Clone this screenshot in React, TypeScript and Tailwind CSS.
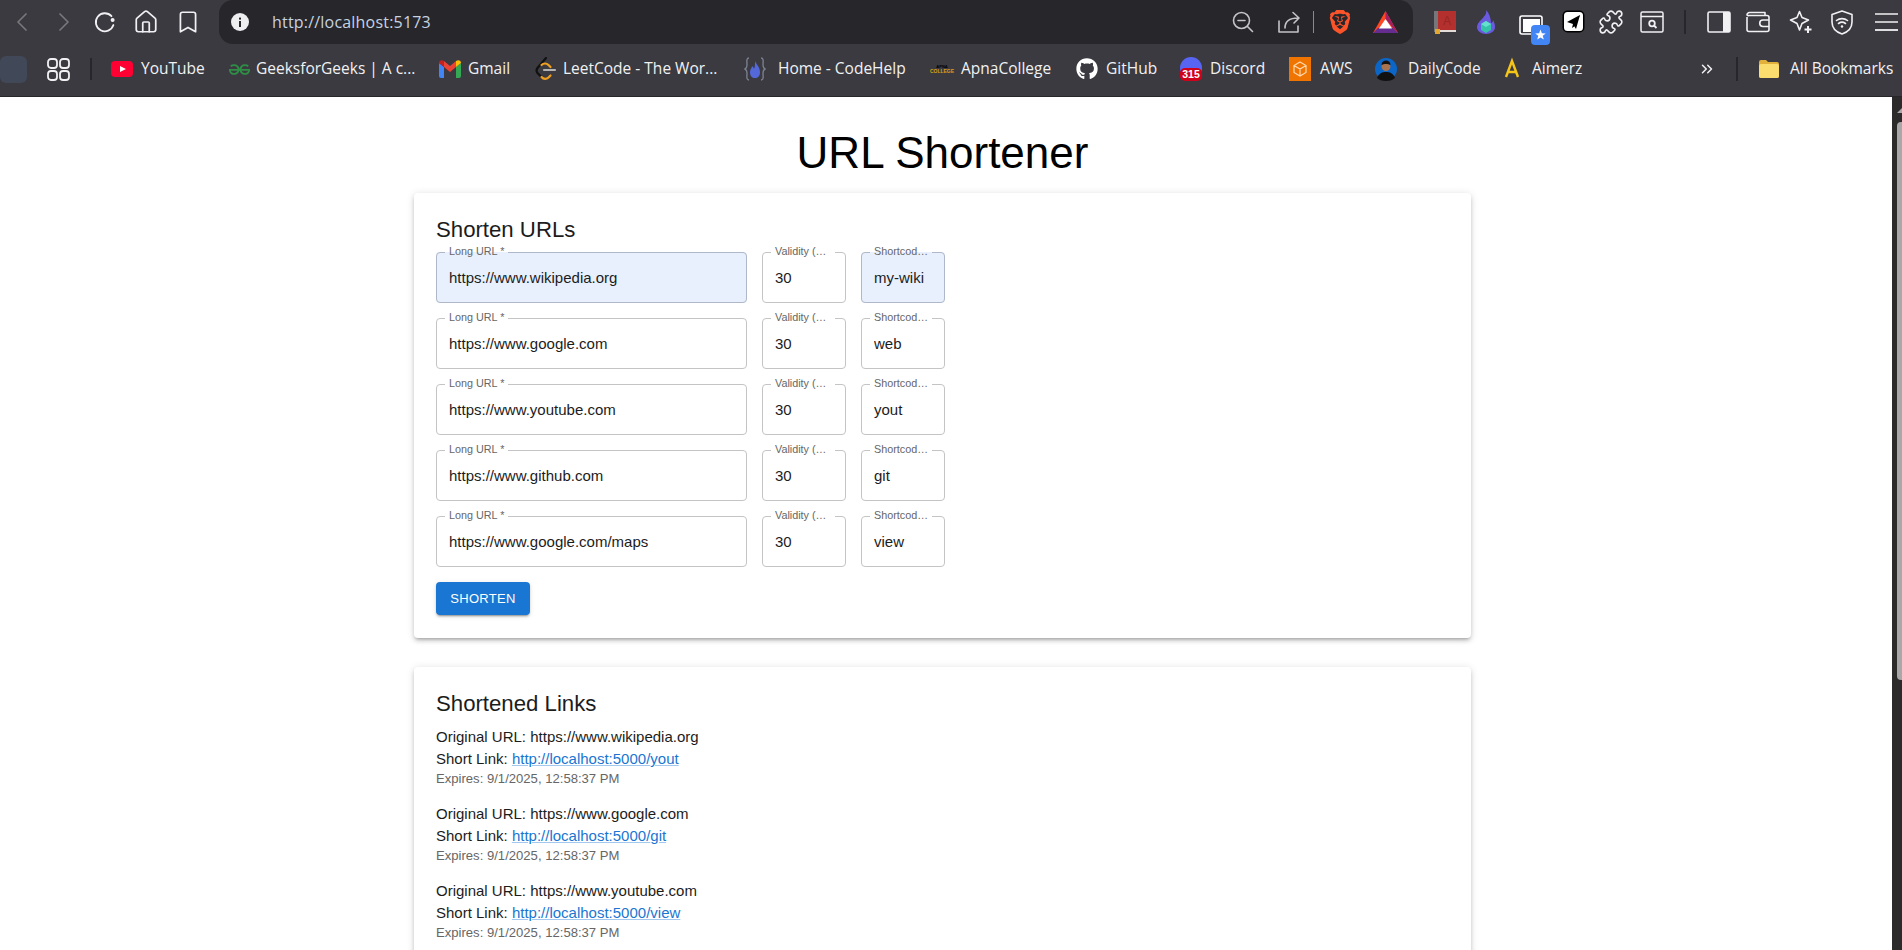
import type { ReactNode } from "react";
import {
  Bookmark,
  ChevronLeft,
  ChevronRight,
  ChevronsRight,
  Home,
  Puzzle,
} from "lucide-react";
import { FaGithub } from "react-icons/fa";
import { SiBrave, SiGeeksforgeeks } from "react-icons/si";

const rows = [
  { url: "https://www.wikipedia.org", code: "my-wiki", filled: true },
  { url: "https://www.google.com", code: "web", filled: false },
  { url: "https://www.youtube.com", code: "yout", filled: false },
  { url: "https://www.github.com", code: "git", filled: false },
  { url: "https://www.google.com/maps", code: "view", filled: false },
];

const links = [
  { url: "https://www.wikipedia.org", code: "yout" },
  { url: "https://www.google.com", code: "git" },
  { url: "https://www.youtube.com", code: "view" },
];

function Reload() {
  return (
    <svg width="24" height="24" viewBox="0 0 24 24" fill="none" stroke="#f1f1f3" strokeWidth="1.8">
      <path d="M18.5 6.2A9 9 0 1 0 20.4 15" strokeLinecap="round" />
      <circle cx="19.6" cy="10" r="2" fill="#f1f1f3" stroke="none" />
    </svg>
  );
}

function InfoDot() {
  return (
    <svg width="18" height="18" viewBox="0 0 18 18">
      <circle cx="9" cy="9" r="9" fill="#eeeef0" />
      <rect x="8" y="8" width="2" height="6" fill="#27262b" />
      <rect x="8" y="4.6" width="2" height="2" fill="#27262b" />
    </svg>
  );
}

function ZoomMinus() {
  return (
    <svg width="22" height="22" viewBox="0 0 22 22" fill="none" stroke="#c4c4c8" strokeWidth="1.6" strokeLinecap="round">
      <circle cx="9.5" cy="9.5" r="8" />
      <path d="M6 9.5h7M15.5 15.5l5 5" />
    </svg>
  );
}

function ShareIcon() {
  return (
    <svg width="24" height="24" viewBox="0 0 24 24" fill="none" stroke="#c4c4c8" strokeWidth="1.6" strokeLinecap="round" strokeLinejoin="round">
      <path d="M2 11v11h19v-6" />
      <path d="M8 18c0-6 4-10 13-10M16 2.5 22 8l-5 5" />
    </svg>
  );
}

function BatTriangle() {
  return (
    <svg width="25" height="24" viewBox="0 0 25 24">
      <polygon points="12.5,1 0,23 25,23" fill="#ff4724" />
      <polygon points="12.5,1 12.5,9 20,18 25,23" fill="#9e1f63" />
      <polygon points="0,23 25,23 20,18 5,18" fill="#662d91" />
      <polygon points="12.5,9 6,18.5 19,18.5" fill="#ffffff" />
    </svg>
  );
}

function RedBook() {
  return (
    <svg width="22" height="24" viewBox="0 0 22 24">
      <rect x="0" y="1" width="5" height="21" fill="#77767a" />
      <rect x="4" y="1" width="18" height="19" fill="#b3302e" />
      <rect x="4" y="20" width="18" height="2" fill="#e4dcd8" />
      <text x="13" y="15" textAnchor="middle" fontSize="12" fill="#982724" fontFamily="Liberation Sans, sans-serif">A</text>
      <rect x="1" y="19" width="5" height="5" fill="#e0a82e" />
    </svg>
  );
}

function Flame() {
  return (
    <svg width="20" height="24" viewBox="0 0 20 24">
      <path d="M10 0c1 4-1 5-4 9C3 12 1 14 1 17c0 4 4 7 9 7s9-3 9-7c0-3-1-5-2-7 0 2-1 3-2 3 0-5-2-10-5-13z" fill="#6a5ae0" />
      <path d="M10 11l5 3v6l-5 3-5-3v-6z" fill="#35c3a8" />
      <path d="M10 11l5 3-5 3-5-3z" fill="#66dfd0" />
    </svg>
  );
}

function TabsStar() {
  return (
    <svg width="32" height="31" viewBox="0 0 32 31">
      <rect x="1" y="1" width="22" height="18" rx="2" fill="none" stroke="#fff" strokeWidth="1.6" />
      <rect x="4" y="4" width="17" height="13" fill="#fff" />
      <rect x="12" y="10" width="19" height="20" rx="4" fill="#4285f4" />
      <polygon points="21.500,14.500 22.900,18.300 26.800,18.400 23.700,20.800 24.800,24.600 21.500,22.400 18.200,24.600 19.300,20.800 16.200,18.400 20.100,18.300" fill="#fff" />
    </svg>
  );
}

function SendBox() {
  return (
    <svg width="23" height="23" viewBox="0 0 23 23">
      <rect x="0.500" y="0.500" width="22" height="22" rx="5" fill="#000" />
      <rect x="2" y="2" width="19" height="19" rx="3.500" fill="#fff" />
      <path d="M5 12 18 5l-4 14-3-5z" fill="#000" />
      <path d="M18 5l-7 9-1 4 3-2" fill="#000" />
    </svg>
  );
}

function SearchBox() {
  return (
    <svg width="24" height="22" viewBox="0 0 24 22" fill="none" stroke="#f1f1f3" strokeWidth="1.5">
      <rect x="1" y="1" width="22" height="20" rx="1.500" />
      <path d="M1 5.500h22" />
      <circle cx="12" cy="12.500" r="2.800" strokeWidth="1.800" />
      <path d="M14 14.500l2.500 2.500" strokeWidth="1.800" />
    </svg>
  );
}

function SidePanel() {
  return (
    <svg width="24" height="22" viewBox="0 0 24 22">
      <rect x="1" y="1" width="22" height="20" rx="1.500" fill="none" stroke="#f1f1f3" strokeWidth="1.600" />
      <rect x="16" y="1" width="7" height="20" fill="#f1f1f3" />
    </svg>
  );
}

function WalletBox() {
  return (
    <svg width="24" height="22" viewBox="0 0 24 22" fill="none" stroke="#f1f1f3" strokeWidth="1.600" strokeLinejoin="round">
      <path d="M1 6V18.500A2 2 0 0 0 3 20.500H21A2 2 0 0 0 23 18.500V6.500A2 2 0 0 0 21 4.500H3A2 2 0 0 1 1 4 2.500 2.500 0 0 1 3.500 1.500H19V4.500" />
      <path d="M23 9h-6a2.500 2.500 0 0 0 0 6.500h6" />
    </svg>
  );
}

function SparkleIcon() {
  return (
    <svg width="24" height="24" viewBox="0 0 24 24" fill="none" stroke="#f1f1f3" strokeWidth="1.600" strokeLinejoin="round">
      <path d="M10.500 1.500 13 7.500 19.500 10 13 13.500 10.500 20 8 13.500 1.500 10 8 7.500z" />
      <path d="M19 16v7M15.500 19.500h7" strokeWidth="2" />
    </svg>
  );
}

function WifiShield() {
  return (
    <svg width="22" height="25" viewBox="0 0 22 25" fill="none" stroke="#f1f1f3" strokeWidth="1.600" strokeLinecap="round">
      <path d="M11 1 21 4.500V12c0 6-4 10-10 12C5 22 1 18 1 12V4.500z" strokeLinejoin="round" />
      <path d="M5.500 10.500c3-2.500 8-2.500 11 0M7.500 13.500c2-1.500 5-1.500 7 0" />
      <circle cx="11" cy="16.500" r="1.200" fill="#f1f1f3" stroke="none" />
    </svg>
  );
}

function MenuLines() {
  return (
    <svg width="23" height="20" viewBox="0 0 23 20" stroke="#f1f1f3" strokeWidth="1.800">
      <path d="M0 2h23M0 10h23" strokeOpacity="0.75" />
      <path d="M0 18h23" />
    </svg>
  );
}

function GridIcon() {
  return (
    <svg width="23" height="23" viewBox="0 0 23 23" fill="none" stroke="#f1f1f3" strokeWidth="1.800">
      <rect x="1" y="1" width="9" height="9" rx="3" />
      <rect x="13" y="1" width="9" height="9" rx="3" />
      <rect x="1" y="13" width="9" height="9" rx="3" />
      <rect x="13" y="13" width="9" height="9" rx="3" />
    </svg>
  );
}

function YoutubeMark() {
  return (
    <svg width="22" height="16" viewBox="0 0 22 16">
      <rect width="22" height="16" rx="4" fill="#ff0033" />
      <polygon points="9,5 15,8 9,11" fill="#fff" />
    </svg>
  );
}

function GmailMark() {
  return (
    <svg width="22" height="18" viewBox="0 0 22 18">
      <path d="M0 3v13a2 2 0 0 0 2 2h3V7z" fill="#4285f4" />
      <path d="M22 3v13a2 2 0 0 1-2 2h-3V7z" fill="#34a853" />
      <path d="M5 7l6 5 6-5V1l-6 5-6-5z" fill="#ea4335" />
      <path d="M0 3c0-3 3-3.500 5-2v6L0 3z" fill="#c5221f" />
      <path d="M22 3c0-3-3-3.500-5-2v6l5-4z" fill="#fbbc04" />
    </svg>
  );
}

function LeetMark() {
  return (
    <svg width="22" height="24" viewBox="0 0 22 24" fill="none" strokeWidth="2.200" strokeLinecap="round">
      <path d="M11 1 2.500 11c-1.500 2-1.500 3 0 5l4 4" stroke="#111" />
      <path d="M6.500 20c2 2.500 5 2.500 7 .500l2-2" stroke="#f0a020" />
      <path d="M9 13h11" stroke="#b3b3b3" />
      <path d="M6.500 8c2-2 5-2 7 0l2 2" stroke="#f0a020" />
    </svg>
  );
}

function CodeHelpMark() {
  return (
    <svg width="22" height="24" viewBox="0 0 22 24" fill="none">
      <path d="M5 1C2 1 3 5 3 8s-2 4-2 4 2 1 2 4-1 7 2 7M17 1c3 0 2 4 2 7s2 4 2 4-2 1-2 4 1 7-2 7" stroke="#7a7f8c" strokeWidth="1.400" />
      <path d="M11 4c1 3 5 6 5 11 0 4-2 6-5 6s-5-2-5-6c0-3 2-4 2-6 1 1 2 2 2 3 1-2 1-5 1-8z" fill="#5468d8" />
    </svg>
  );
}

function ApnaMark() {
  return (
    <div className="w-[22px] flex flex-col items-center font-['Liberation_Sans',sans-serif] font-bold leading-none">
      <span className="text-[4px] text-black">APNA</span>
      <span className="text-[5px] text-[#d9a016]">COLLEGE</span>
    </div>
  );
}

function DiscordBadge() {
  return (
    <div className="relative w-[22px] h-[24px]">
      <div className="w-[22px] h-[22px] rounded-full bg-[#5865f2]" />
      <span className="absolute left-0 bottom-0 w-[22px] h-[13px] rounded-[5px] bg-[#d0021b] text-white text-[10.5px] leading-[13px] text-center font-bold font-['Liberation_Sans',sans-serif]">
        315
      </span>
    </div>
  );
}

function AwsMark() {
  return (
    <svg width="22" height="24" viewBox="0 0 22 24">
      <rect width="22" height="24" fill="#f07400" />
      <path d="M11 5l6 3.500v7L11 19l-6-3.500v-7zM5 8.500l6 3.500 6-3.500M11 12v7" fill="none" stroke="#ffd9b0" strokeWidth="1.200" />
    </svg>
  );
}

function DailyMark() {
  return (
    <svg width="22" height="24" viewBox="0 0 22 24">
      <circle cx="11" cy="12" r="11" fill="#0b66c8" />
      <path d="M2 21c2-5 5-6 9-6s7 1 9 6c-2 2-5 3-9 3s-7-1-9-3z" fill="#111" />
      <circle cx="11" cy="9.500" r="4.500" fill="#a8734e" />
      <path d="M6.500 8c0-3 2-4.500 4.500-4.500S15.500 5 15.500 8c-2-1.500-7-1.500-9 0z" fill="#15110f" />
    </svg>
  );
}

function AimerzMark() {
  return (
    <svg width="22" height="24" viewBox="0 0 22 24" fill="none" stroke="#f5c518" strokeWidth="2.400">
      <path d="M5 20 11 4l6 16M7 15h8" />
    </svg>
  );
}

function FolderMark() {
  return (
    <svg width="22" height="20" viewBox="0 0 22 20">
      <path d="M1 3a2 2 0 0 1 2-2h5l2 2h9a2 2 0 0 1 2 2v12a2 2 0 0 1-2 2H3a2 2 0 0 1-2-2z" fill="#e2b13c" />
      <rect x="1" y="5" width="20" height="14" rx="2" fill="#fbdc6e" />
    </svg>
  );
}

function Item({ icon, className, textClass = "ml-[8px]", children }: { icon: ReactNode; className: string; textClass?: string; children: string }) {
  return (
    <div className={`${className} flex items-center shrink-0`}>
      <div className="w-[22px] h-[24px] flex items-center justify-center shrink-0">{icon}</div>
      <span className={`${textClass} text-[#f1f1f3] whitespace-nowrap`}>{children}</span>
    </div>
  );
}

function BrowserBar() {
  return (
    <div className="bg-[#3a3a40] border-b border-[#27262b] font-['Open_Sans',sans-serif]">
      <div className="h-[46px] flex items-start">
        <div className="h-[44px] flex items-center pl-[1px] w-[219px] shrink-0">
          <div className="w-[42px] flex justify-center"><ChevronLeft size={32} strokeWidth={1.3} color="#77777c" /></div>
          <div className="w-[41px] flex justify-center"><ChevronRight size={32} strokeWidth={1.3} color="#77777c" /></div>
          <div className="w-[41px] flex justify-center"><Reload /></div>
          <div className="w-[42px] flex justify-center"><Home size={26} strokeWidth={1.6} color="#f1f1f3" /></div>
          <div className="w-[42px] flex justify-center"><Bookmark size={26} strokeWidth={1.6} color="#f1f1f3" /></div>
        </div>
        <div className="w-[1194px] h-[44px] rounded-[14px] bg-[#27262b] flex items-center pl-[12px] shrink-0">
          <InfoDot />
          <span className="ml-[23px] text-[16px] text-[#c6d3e0] tracking-[0.2px]">http://localhost:5173</span>
          <div className="ml-auto flex items-center">
            <ZoomMinus />
            <div className="ml-[23px]"><ShareIcon /></div>
            <div className="ml-[12px] w-px h-[22px] bg-[#8a8a8e]" />
            <div className="ml-[14px]"><SiBrave size={24} color="#fb542b" /></div>
            <div className="ml-[21px] mr-[15px]"><BatTriangle /></div>
          </div>
        </div>
        <div className="h-[44px] flex items-center">
          <div className="ml-[21px]"><RedBook /></div>
          <div className="ml-[20px]"><Flame /></div>
          <div className="ml-[23px] mt-[16px]"><TabsStar /></div>
          <div className="ml-[11px] -mt-[1px]"><SendBox /></div>
          <div className="ml-[13px]"><Puzzle size={26} strokeWidth={1.5} color="#f1f1f3" /></div>
          <div className="ml-[16px]"><SearchBox /></div>
          <div className="ml-[20px] w-[2px] h-[24px] bg-[#27262b]" />
          <div className="ml-[21px]"><SidePanel /></div>
          <div className="ml-[15px]"><WalletBox /></div>
          <div className="ml-[19px]"><SparkleIcon /></div>
          <div className="ml-[18px]"><WifiShield /></div>
          <div className="ml-[22px]"><MenuLines /></div>
        </div>
      </div>
      <div className="h-[50px] flex items-center text-[15.5px] pb-[4px]">
        <div className="w-[27px] h-[27px] rounded-md bg-[#414858] shrink-0" />
        <div className="ml-[20px]"><GridIcon /></div>
        <div className="ml-[20px] w-[2px] h-[22px] bg-[#27262b] mr-[19px]" />
        <Item icon={<YoutubeMark />} className="w-[117px]">YouTube</Item>
        <Item icon={<SiGeeksforgeeks size={21} color="#2f8d46" />} className="w-[211px]" textClass="ml-[6px]">GeeksforGeeks | A c...</Item>
        <Item icon={<GmailMark />} className="w-[96px]" textClass="ml-[7px]">Gmail</Item>
        <Item icon={<LeetMark />} className="w-[209px]" textClass="ml-[6px]">LeetCode - The Wor...</Item>
        <Item icon={<CodeHelpMark />} className="w-[187px]" textClass="ml-[12px]">Home - CodeHelp</Item>
        <Item icon={<ApnaMark />} className="w-[145px]">ApnaCollege</Item>
        <Item icon={<FaGithub size={22} color="#fff" />} className="w-[104px]">GitHub</Item>
        <Item icon={<DiscordBadge />} className="w-[109px]">Discord</Item>
        <Item icon={<AwsMark />} className="w-[86px]" textClass="ml-[9px]">AWS</Item>
        <Item icon={<DailyMark />} className="w-[126px]" textClass="ml-[11px]">DailyCode</Item>
        <Item icon={<AimerzMark />} className="w-[198px]" textClass="ml-[9px]">Aimerz</Item>
        <ChevronsRight size={18} strokeWidth={2} color="#f1f1f3" className="-ml-[1px] shrink-0" />
        <div className="ml-[20px] w-[2px] h-[24px] bg-[#27262b] shrink-0" />
        <Item icon={<FolderMark />} className="ml-[20px] w-[134px]" textClass="ml-[10px]">All Bookmarks</Item>
      </div>
    </div>
  );
}

function Field({ label, value, filled, className, notch }: { label: string; value: string; filled: boolean; className: string; notch: string }) {
  return (
    <fieldset className={`${className} ${filled ? "bg-[#e8f0fe] border-[#aeb8c8]" : "bg-white border-[#c4c4c4]"} h-[56px] min-w-0 border rounded-[4px] px-[7px] shrink-0`}>
      <legend className={`${notch} h-[11px] px-[4px] -translate-y-[1px] text-[10.8px] leading-[11px] text-[#666666] whitespace-nowrap`}>{label}</legend>
      <input
        readOnly
        value={value}
        className="block w-full h-[39px] pl-[5px] text-[15px] text-[#1c1c1c] bg-transparent outline-none"
      />
    </fieldset>
  );
}

function Card({ children, className }: { children: ReactNode; className: string }) {
  return (
    <div className={`${className} bg-white rounded-[4px] px-[22px] py-[22.8px] shadow-[0_3px_3px_-2px_rgba(0,0,0,0.2),0_3px_4px_0_rgba(0,0,0,0.14),0_1px_8px_0_rgba(0,0,0,0.12)]`}>
      {children}
    </div>
  );
}

export default function App() {
  return (
    <div className="h-[950px] overflow-hidden flex flex-col bg-white font-['Liberation_Sans',Arial,sans-serif]">
      <BrowserBar />
      <div className="flex flex-1 min-h-0">
        <main className="flex-1 min-w-0 overflow-hidden pr-[7px]">
          <h1 className="mt-[28px] h-[56px] mb-[12px] text-center text-[44px] leading-[56px] text-black">URL Shortener</h1>
          <div className="w-[1057px] mx-auto">
            <Card className="mb-[29px]">
              <h2 className="text-[22.2px] leading-[28px] mb-[3px] text-[#1c1c1c]">Shorten URLs</h2>
              <div className="flex flex-col gap-[10px] mt-[1px]">
                {rows.map((r) => (
                  <div key={r.url} className="flex gap-[15px]">
                    <Field label="Long URL *" value={r.url} filled={r.filled} className="w-[311px]" notch="ml-[1px]" />
                    <Field label="Validity (…" value="30" filled={false} className="w-[84px]" notch="ml-[1px] pr-[9px]" />
                    <Field label="Shortcod…" value={r.code} filled={r.filled} className="w-[84px]" notch="ml-[1px]" />
                  </div>
                ))}
              </div>
              <button className="mt-[15px] block w-[94px] h-[33px] rounded-[4px] bg-[#1976d2] text-white text-[13px] tracking-[0.3px] uppercase shadow-[0_3px_1px_-2px_rgba(0,0,0,0.2),0_2px_2px_0_rgba(0,0,0,0.14),0_1px_5px_0_rgba(0,0,0,0.12)]">
                Shorten
              </button>
            </Card>
            <Card className="">
              <h2 className="text-[22.2px] leading-[30px] text-[#1c1c1c] mb-[6px]">Shortened Links</h2>
              <div className="flex flex-col gap-[14px]">
                {links.map((l) => (
                  <div key={l.code}>
                    <p className="text-[15px] leading-[23px] text-[#1c1c1c]">Original URL: {l.url}</p>
                    <p className="text-[15px] leading-[22px] text-[#1c1c1c]">
                      Short Link:{" "}
                      <a href="#" className="text-[#1976d2] underline decoration-[#1976d2]/40">
                        http://localhost:5000/{l.code}
                      </a>
                    </p>
                    <p className="text-[13.1px] leading-[18px] text-[#666666]">Expires: 9/1/2025, 12:58:37 PM</p>
                  </div>
                ))}
              </div>
            </Card>
          </div>
        </main>
        <div className="w-[10px] bg-[#2b2b2b] shrink-0 overflow-hidden pt-[11px]">
          <div className="ml-[5px] w-0 h-0 border-x-[5px] border-x-transparent border-b-[5px] border-b-[#a8a8a8]" />
          <div className="ml-[5px] mt-[9px] w-[10px] h-[558px] rounded-[4px] bg-[#a8a8a8]" />
        </div>
      </div>
    </div>
  );
}
